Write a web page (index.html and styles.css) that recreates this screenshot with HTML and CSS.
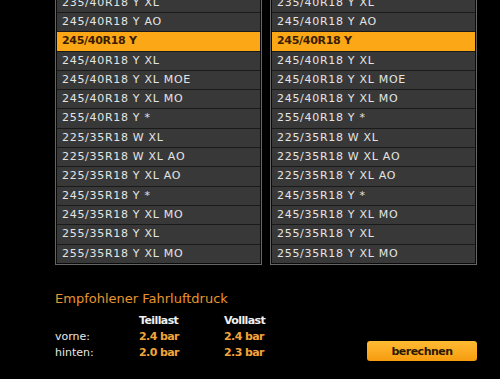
FILE: index.html
```html
<!DOCTYPE html>
<html lang="de">
<head>
  <meta charset="UTF-8">
  <meta name="viewport" content="width=device-width, initial-scale=1.0">
  <title>Reifenauswahl</title>
  <link rel="stylesheet" href="styles.css">
</head>
<body>
  <div class="page">
    <!-- Tyre size lists -->
    <div class="lists">
      <ul class="size-list">
        <li>235/40R18 Y XL</li>
        <li>245/40R18 Y AO</li>
        <li class="selected">245/40R18 Y</li>
        <li>245/40R18 Y XL</li>
        <li>245/40R18 Y XL MOE</li>
        <li>245/40R18 Y XL MO</li>
        <li>255/40R18 Y *</li>
        <li>225/35R18 W XL</li>
        <li>225/35R18 W XL AO</li>
        <li>225/35R18 Y XL AO</li>
        <li>245/35R18 Y *</li>
        <li>245/35R18 Y XL MO</li>
        <li>255/35R18 Y XL</li>
        <li>255/35R18 Y XL MO</li>
      </ul>
      <ul class="size-list">
        <li>235/40R18 Y XL</li>
        <li>245/40R18 Y AO</li>
        <li class="selected">245/40R18 Y</li>
        <li>245/40R18 Y XL</li>
        <li>245/40R18 Y XL MOE</li>
        <li>245/40R18 Y XL MO</li>
        <li>255/40R18 Y *</li>
        <li>225/35R18 W XL</li>
        <li>225/35R18 W XL AO</li>
        <li>225/35R18 Y XL AO</li>
        <li>245/35R18 Y *</li>
        <li>245/35R18 Y XL MO</li>
        <li>255/35R18 Y XL</li>
        <li>255/35R18 Y XL MO</li>
      </ul>
    </div>

    <!-- Pressure result -->
    <h2 class="result-title">Empfohlener Fahrluftdruck</h2>
    <div class="result">
      <div class="pressure">
        <span></span>
        <span class="col-head">Teillast</span>
        <span class="col-head">Volllast</span>
        <span class="label">vorne:</span>
        <span class="value">2.4 bar</span>
        <span class="value">2.4 bar</span>
        <span class="label">hinten:</span>
        <span class="value">2.0 bar</span>
        <span class="value">2.3 bar</span>
      </div>
      <button class="calc-button">berechnen</button>
    </div>
  </div>
</body>
</html>
```

FILE: styles.css
```css
/* Page */
body {
  margin: 0;
  background-color: #000;
  color: #e4e4e4;
  font-family: "DejaVu Sans", Verdana, sans-serif;
  overflow: hidden;
}
.page {
  width: 422px;
  padding-left: 55px;
}
/* Lists */
.lists {
  display: flex;
  gap: 8px;
  margin-top: -9.3px;
}
.size-list {
  list-style: none;
  margin: 0;
  padding: 1px;
  width: 203px;
  border: 1px solid #666;
  background-color: #0a0a0a;
}
.size-list li {
  box-sizing: border-box;
  height: 19.3px;
  line-height: 18.3px;
  padding-left: 5px;
  border-top: 1px solid #1a1a1a;
  background-color: #383838;
  font-size: 11px;
  letter-spacing: 0.7px;
  white-space: nowrap;
}
.size-list li.selected {
  background-color: #fba716;
  color: #3a1c00;
  font-weight: bold;
  letter-spacing: -0.3px;
}
/* Result */
.result-title {
  margin: 26px 0 0;
  font-size: 13px;
  line-height: 16px;
  font-weight: normal;
  color: #e8952e;
}
.result {
  display: flex;
  justify-content: space-between;
  align-items: flex-end;
  margin-top: 6.4px;
}
.pressure {
  display: grid;
  grid-template-columns: 84px 85px auto;
  font-size: 11px;
  line-height: 16px;
}
.col-head {
  font-weight: bold;
  letter-spacing: -0.6px;
  color: #f0f0f0;
}
.label {
  color: #e8e8e8;
}
.value {
  font-weight: bold;
  letter-spacing: -0.6px;
  color: #f2a53a;
}
.calc-button {
  width: 110px;
  height: 20px;
  padding: 0;
  border: none;
  border-radius: 3px;
  background: linear-gradient(#ffbb33, #f79c10);
  color: #2a1800;
  font-family: inherit;
  font-size: 11px;
  font-weight: bold;
  letter-spacing: -0.5px;
  cursor: pointer;
}
```
